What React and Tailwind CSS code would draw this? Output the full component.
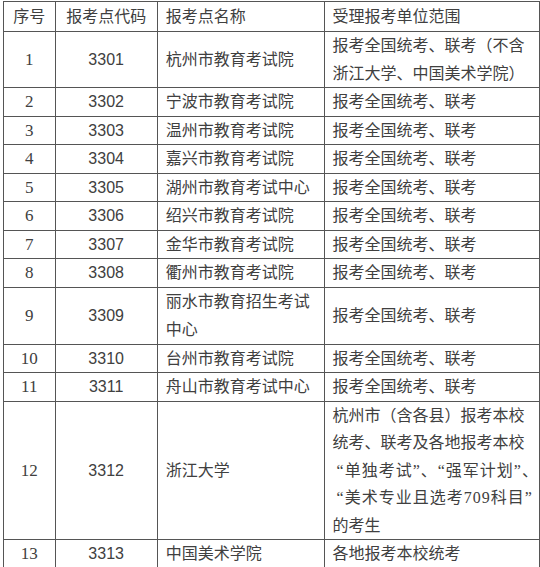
const rows = [
  { no: "1", code: "3301", name: ["杭州市教育考试院"], scope: ["报考全国统考、联考（不含", "浙江大学、中国美术学院）"], h: "h-[56px]" },
  { no: "2", code: "3302", name: ["宁波市教育考试院"], scope: ["报考全国统考、联考"], h: "h-[28px]" },
  { no: "3", code: "3303", name: ["温州市教育考试院"], scope: ["报考全国统考、联考"], h: "h-[28px]" },
  { no: "4", code: "3304", name: ["嘉兴市教育考试院"], scope: ["报考全国统考、联考"], h: "h-[28px]" },
  { no: "5", code: "3305", name: ["湖州市教育考试中心"], scope: ["报考全国统考、联考"], h: "h-[28px]" },
  { no: "6", code: "3306", name: ["绍兴市教育考试院"], scope: ["报考全国统考、联考"], h: "h-[28px]" },
  { no: "7", code: "3307", name: ["金华市教育考试院"], scope: ["报考全国统考、联考"], h: "h-[28px]" },
  { no: "8", code: "3308", name: ["衢州市教育考试院"], scope: ["报考全国统考、联考"], h: "h-[28px]" },
  { no: "9", code: "3309", name: ["丽水市教育招生考试", "中心"], scope: ["报考全国统考、联考"], h: "h-[57px]" },
  { no: "10", code: "3310", name: ["台州市教育考试院"], scope: ["报考全国统考、联考"], h: "h-[28px]" },
  { no: "11", code: "3311", name: ["舟山市教育考试中心"], scope: ["报考全国统考、联考"], h: "h-[28px]" },
  {
    no: "12",
    code: "3312",
    name: ["浙江大学"],
    scope: [
      "杭州市（含各县）报考本校",
      "统考、联考及各地报考本校",
      "“单独考试”、“强军计划”、",
      "“美术专业且选考709科目”",
      "的考生",
    ],
    h: "h-[138px]",
  },
  { no: "13", code: "3313", name: ["中国美术学院"], scope: ["各地报考本校统考"], h: "h-[28px]" },
];

const cjk = "font-['Liberation_Serif','Noto_Sans_CJK_SC',serif]";

function Lines({ lines }) {
  return lines.map((l, i) => (
    <div key={i} className={l.startsWith("“") ? "whitespace-nowrap pl-1 tracking-[1px]" : "whitespace-nowrap"}>
      {l}
    </div>
  ));
}

export default function App() {
  return (
    <div className="w-[540px] h-[567px] bg-white pt-px pl-[3px]">
      <table className="table-fixed border-collapse text-[16px] leading-[27.5px] text-[#404040]">
        <colgroup>
          <col className="w-[52px]" />
          <col className="w-[103px]" />
          <col className="w-[167px]" />
          <col className="w-[213px]" />
        </colgroup>
        <thead>
          <tr className={`h-[30px] ${cjk}`}>
            <th className="border border-[#555] font-normal text-center">序号</th>
            <th className="border border-[#555] font-normal text-center">报考点代码</th>
            <th className="border border-[#555] font-normal text-left pl-2">报考点名称</th>
            <th className="border border-[#555] font-normal text-left pl-2">受理报考单位范围</th>
          </tr>
        </thead>
        <tbody>
          {rows.map((r) => (
            <tr key={r.no} className={r.h}>
              <td className="border border-[#555] text-center font-['Liberation_Serif',serif] text-[17px]">{r.no}</td>
              <td className="border border-[#555] text-center font-['Liberation_Sans',sans-serif] text-[16px]">{r.code}</td>
              <td className={`border border-[#555] pl-2 ${cjk}`}>
                <Lines lines={r.name} />
              </td>
              <td className={`border border-[#555] pl-2 ${cjk}`}>
                <Lines lines={r.scope} />
              </td>
            </tr>
          ))}
        </tbody>
      </table>
    </div>
  );
}
